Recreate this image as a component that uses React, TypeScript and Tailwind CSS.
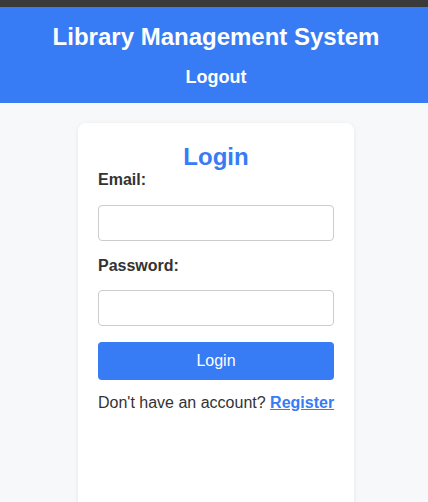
import React from 'react';

const App: React.FC = () => {
  return (
    <div className="min-h-screen bg-[#f7f8fa] font-['Liberation_Sans',Arial,sans-serif] text-[#333]">
      <div className="h-[7px] bg-[#3a3a3a]"></div>
      <header className="bg-[#377bf5] pt-4 pb-4 pl-1 text-center text-white">
        <h1 className="text-2xl font-bold leading-[1.15]">Library Management System</h1>
        <div className="mt-4 text-[18px] font-bold leading-[1.15]">Logout</div>
      </header>
      <main className="pl-1 pt-5">
        <div className="mx-auto h-[420px] w-[276px] rounded-lg bg-white p-5 shadow-[0_1px_4px_rgba(0,0,0,0.08)]">
          <h2 className="text-center text-2xl font-bold leading-[1.15] text-[#377bf5]">Login</h2>
          <form>
            <label className="block text-base font-bold leading-[1.15]">Email:</label>
            <input
              type="email"
              className="mt-4 block h-9 w-full rounded border border-[#ccc] bg-white px-2"
            />
            <label className="mt-4 block text-base font-bold leading-[1.15]">Password:</label>
            <input
              type="password"
              className="mt-[14px] block h-9 w-full rounded border border-[#ccc] bg-white px-2"
            />
            <button
              type="button"
              className="mt-4 block h-[38px] w-full rounded bg-[#377bf5] text-base text-white"
            >
              Login
            </button>
          </form>
          <p className="mt-[14px] whitespace-nowrap text-base leading-[1.15]">
            Don't have an account?{' '}
            <a href="#" className="font-bold text-[#377bf5] underline">
              Register
            </a>
          </p>
        </div>
      </main>
    </div>
  );
};

export default App;
